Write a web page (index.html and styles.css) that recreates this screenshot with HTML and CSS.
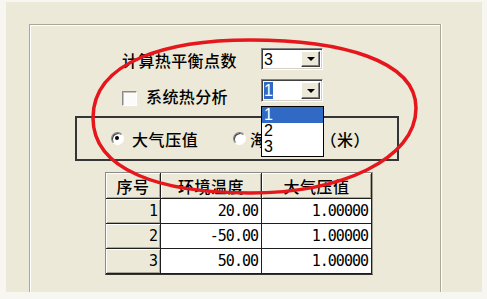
FILE: index.html
```html
<!DOCTYPE html>
<html lang="zh-CN">
<head>
<meta charset="utf-8">
<title>计算热平衡点数</title>
<link rel="stylesheet" href="styles.css">
</head>
<body>
<div class="window">
  <div class="page">
    <div class="row row1">
      <span class="label">计算热平衡点数</span>
      <div class="combo">
        <span class="combo-text">3</span>
        <span class="combo-btn"><i class="arrow"></i></span>
      </div>
    </div>
    <div class="row row2">
      <div class="check">
        <span class="checkbox"></span>
        <span class="check-text">系统热分析</span>
      </div>
      <div class="combo combo2">
        <span class="combo-text"><span class="sel">1</span></span>
        <span class="combo-btn"><i class="arrow"></i></span>
        <ul class="droplist">
          <li class="active">1</li>
          <li>2</li>
          <li>3</li>
        </ul>
      </div>
    </div>
    <div class="groupbox">
      <span class="radio-item item1"><span class="radio checked"></span><span class="rtext">大气压值</span></span>
      <span class="radio-item item2"><span class="radio"></span><span class="rtext">海拔高度<span class="paren">（米）</span></span></span>
    </div>
    <table class="grid">
      <thead>
        <tr><th class="c1">序号</th><th class="c2">环境温度</th><th class="c3">大气压值</th></tr>
      </thead>
      <tbody>
        <tr><td class="rowhead">1</td><td>20.00</td><td>1.00000</td></tr>
        <tr><td class="rowhead">2</td><td>-50.00</td><td>1.00000</td></tr>
        <tr><td class="rowhead">3</td><td>50.00</td><td>1.00000</td></tr>
      </tbody>
    </table>
  </div>
</div>
<svg class="ellipse" width="487" height="299" viewBox="0 0 487 299">
  <path d="M93,118 C93,60 170,40 250,40 C340,40 416,60 416,108 C416,160 340,193 250,193 C160,193 93,170 93,118 Z" fill="none" stroke="#e5161c" stroke-width="3.5"/>
</svg>
</body>
</html>
```

FILE: styles.css
```css
html, body {
  margin: 0;
  padding: 0;
}
body {
  width: 487px;
  height: 299px;
  position: relative;
  overflow: hidden;
  background: #f7f6f1;
  font-family: "Noto Sans CJK SC", "Noto Sans", sans-serif;
  font-size: 16px;
  font-weight: 500;
  color: #000;
}
.window {
  margin: 2px 5px 0 6px;
  height: 290px;
  box-sizing: border-box;
  padding: 22px 41px 0 23px;
  background: #ece9d8;
}
.page {
  height: 268px;
  box-sizing: border-box;
  border: 1px solid #aca899;
  border-bottom: none;
  box-shadow: inset 1px 1px 0 #fff, 1px 0 0 #fff;
  display: flex;
  flex-direction: column;
  align-items: flex-start;
}
.row {
  display: flex;
  align-items: flex-start;
  padding-left: 92px;
}
.row1 {
  margin-top: 23px;
  height: 22px;
}
.row2 {
  margin-top: 9px;
  height: 23px;
}
.label {
  width: 139px;
  line-height: 22px;
  padding-top: 1px;
  letter-spacing: 0.4px;
  white-space: nowrap;
}
.combo {
  position: relative;
  width: 62px;
  height: 22px;
  box-sizing: border-box;
  display: flex;
  padding: 2px;
  background: #fff;
  border: 1px solid;
  border-color: #808080 #fff #fff #808080;
  box-shadow: inset 1px 1px 0 #404040, inset -1px -1px 0 #d4d0c8;
}
.combo2 {
  height: 23px;
}
.combo-text {
  flex: 1;
  font-family: "Liberation Sans", Arial, sans-serif;
  font-weight: normal;
  font-size: 16px;
  line-height: 17px;
}
.sel {
  display: inline-block;
  width: 9px;
  background: #316ac5;
  color: #fff;
  line-height: 17px;
}
.combo-btn {
  width: 19px;
  box-sizing: border-box;
  background: #ece9d8;
  border: 1px solid;
  border-color: #fff #404040 #404040 #fff;
  box-shadow: inset -1px -1px 0 #808080;
  display: flex;
  align-items: center;
  justify-content: center;
}
.arrow {
  width: 0;
  height: 0;
  border-left: 4px solid transparent;
  border-right: 4px solid transparent;
  border-top: 4px solid #000;
}
.droplist {
  position: absolute;
  z-index: 5;
  left: -1px;
  top: 26px;
  width: 63px;
  height: 51px;
  box-sizing: border-box;
  margin: 0;
  padding: 0;
  list-style: none;
  background: #fff;
  border: 1px solid #000;
  font-family: "Liberation Sans", Arial, sans-serif;
  font-weight: normal;
  font-size: 16px;
}
.droplist li {
  height: 16px;
  line-height: 16px;
  padding-left: 2px;
}
.droplist li.active {
  background: #316ac5;
  color: #fff;
}
.check {
  width: 139px;
  margin-top: 9px;
  display: flex;
  align-items: flex-start;
  gap: 9px;
}
.checkbox {
  width: 15px;
  height: 15px;
  margin-top: 3px;
  box-sizing: border-box;
  background: #fbfbf9;
  border: 1px solid;
  border-color: #8a8a8a #fff #fff #8a8a8a;
  box-shadow: inset 1px 1px 0 #c8c4b8;
}
.check-text {
  line-height: 16px;
  letter-spacing: 0.4px;
  white-space: nowrap;
}
.groupbox {
  margin-top: 14px;
  margin-left: 45px;
  width: 324px;
  height: 45px;
  box-sizing: border-box;
  border: 2px solid #353535;
  display: flex;
  align-items: center;
  padding-left: 34px;
}
.radio-item {
  display: flex;
  align-items: center;
  white-space: nowrap;
}
.item1 {
  gap: 8px;
  width: 122px;
}
.item2 {
  gap: 4px;
}
.rtext {
  line-height: 16px;
  letter-spacing: 0.6px;
}
.paren {
  margin-left: 4px;
}
.radio {
  position: relative;
  width: 13px;
  height: 13px;
  box-sizing: border-box;
  border-radius: 50%;
  background: #fff;
  border: 1px solid;
  border-color: #808080 #fff #fff #808080;
  box-shadow: inset 1px 1px 0 #404040;
}
.radio.checked::after {
  content: "";
  position: absolute;
  left: 3px;
  top: 3px;
  width: 4px;
  height: 4px;
  border-radius: 50%;
  background: #000;
}
.grid {
  margin-top: 11px;
  margin-left: 75px;
  width: 268px;
  box-sizing: border-box;
  table-layout: fixed;
  border-collapse: separate;
  border-spacing: 0;
  border-top: 1px solid #8a8a8a;
  border-left: 1px solid #8a8a8a;
  border-right: 1px solid #a09c90;
  border-bottom: 1px solid #333;
}
.grid th,
.grid td {
  box-sizing: border-box;
  padding: 0;
  border-right: 1px solid #1e1e1e;
  border-bottom: 1px solid #1e1e1e;
}
.grid th {
  height: 26px;
  font-weight: 500;
  text-align: center;
  line-height: 16px;
  background: #ece9d8;
  box-shadow: inset 1px 1px 0 #fff, inset -1px -1px 0 #aca899;
  letter-spacing: 0.5px;
}
.c1 { width: 55px; }
.c2 { width: 101px; }
.c3 { width: 110px; }
.grid td {
  height: 25px;
  text-align: right;
  padding-right: 3px;
  background: #fff;
  font-family: "DejaVu Sans Mono", "Liberation Mono", monospace;
  font-weight: normal;
  font-size: 15px;
  letter-spacing: -1px;
}
.grid td.rowhead {
  background: #ece9d8;
  box-shadow: inset 1px 1px 0 #fff, inset -1px -1px 0 #aca899;
}
.ellipse {
  position: absolute;
  left: 0;
  top: 0;
  z-index: 10;
  pointer-events: none;
}
```
